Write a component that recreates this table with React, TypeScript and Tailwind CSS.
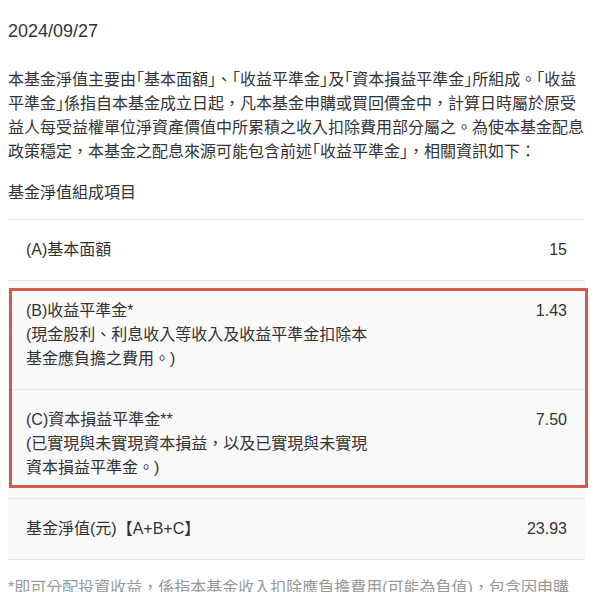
import React from "react";

const H = ({ children }: { children: React.ReactNode }) => (
  <span className="[font-feature-settings:'halt']">{children}</span>
);

export default function App() {
  return (
    <div className="min-h-[592px] w-[602px] bg-white text-[#333] font-['Liberation_Sans','Noto_Sans_CJK_TC',sans-serif]">
      <div className="w-[593px] pl-[8px] pt-[19px]">
        <div className="text-[18px] leading-6">2024/09/27</div>

        <div className="mt-[25px] text-[16px] leading-6 whitespace-nowrap">
          <div>
            本基金淨值主要由<H>「</H>基本面額<H>」</H>、<H>「</H>收益平準金<H>」</H>及<H>「</H>資本損益平準金<H>」</H>所組成。<H>「</H>收益
          </div>
          <div>
            平準金<H>」</H>係指自本基金成立日起，凡本基金申購或買回價金中，計算日時屬於原受
          </div>
          <div>益人每受益權單位淨資產價值中所累積之收入扣除費用部分屬之。為使本基金配息</div>
          <div>
            政策穩定，本基金之配息來源可能包含前述<H>「</H>收益平準金<H>」</H>，相關資訊如下：
          </div>
        </div>

        <div className="mt-[17px] text-[16px] leading-6">基金淨值組成項目</div>

        <div className="relative mt-[14px] w-[577px] text-[16px] leading-6">
          <div className="flex justify-between border-t border-b border-[#e6e6e6] bg-white px-[18px] py-[18px]">
            <div>(A)基本面額</div>
            <div>15</div>
          </div>
          <div className="flex justify-between border-b border-[#e6e6e6] bg-[#f9f9f9] px-[18px] py-[18px]">
            <div>
              <div>(B)收益平準金*</div>
              <div>(現金股利、利息收入等收入及收益平準金扣除本</div>
              <div>基金應負擔之費用。)</div>
            </div>
            <div>1.43</div>
          </div>
          <div className="flex justify-between border-b border-[#e6e6e6] bg-[#f9f9f9] px-[18px] py-[18px]">
            <div>
              <div>(C)資本損益平準金**</div>
              <div>(已實現與未實現資本損益，以及已實現與未實現</div>
              <div>資本損益平準金。)</div>
            </div>
            <div>7.50</div>
          </div>
          <div className="flex justify-between border-b border-[#e6e6e6] bg-[#f9f9f9] px-[18px] py-[18px]">
            <div>基金淨值(元)【A+B+C】</div>
            <div>23.93</div>
          </div>

          <div className="pointer-events-none absolute left-[1px] top-[69px] h-[200px] w-[579px] border-[3px] border-[#d35a4e]" />
        </div>

        <div className="mt-[16px] whitespace-nowrap text-[16px] leading-6 text-[#999]">
          *即可分配投資收益，係指本基金收入扣除應負擔費用(可能為負值)，包含因申購
        </div>
      </div>
    </div>
  );
}
